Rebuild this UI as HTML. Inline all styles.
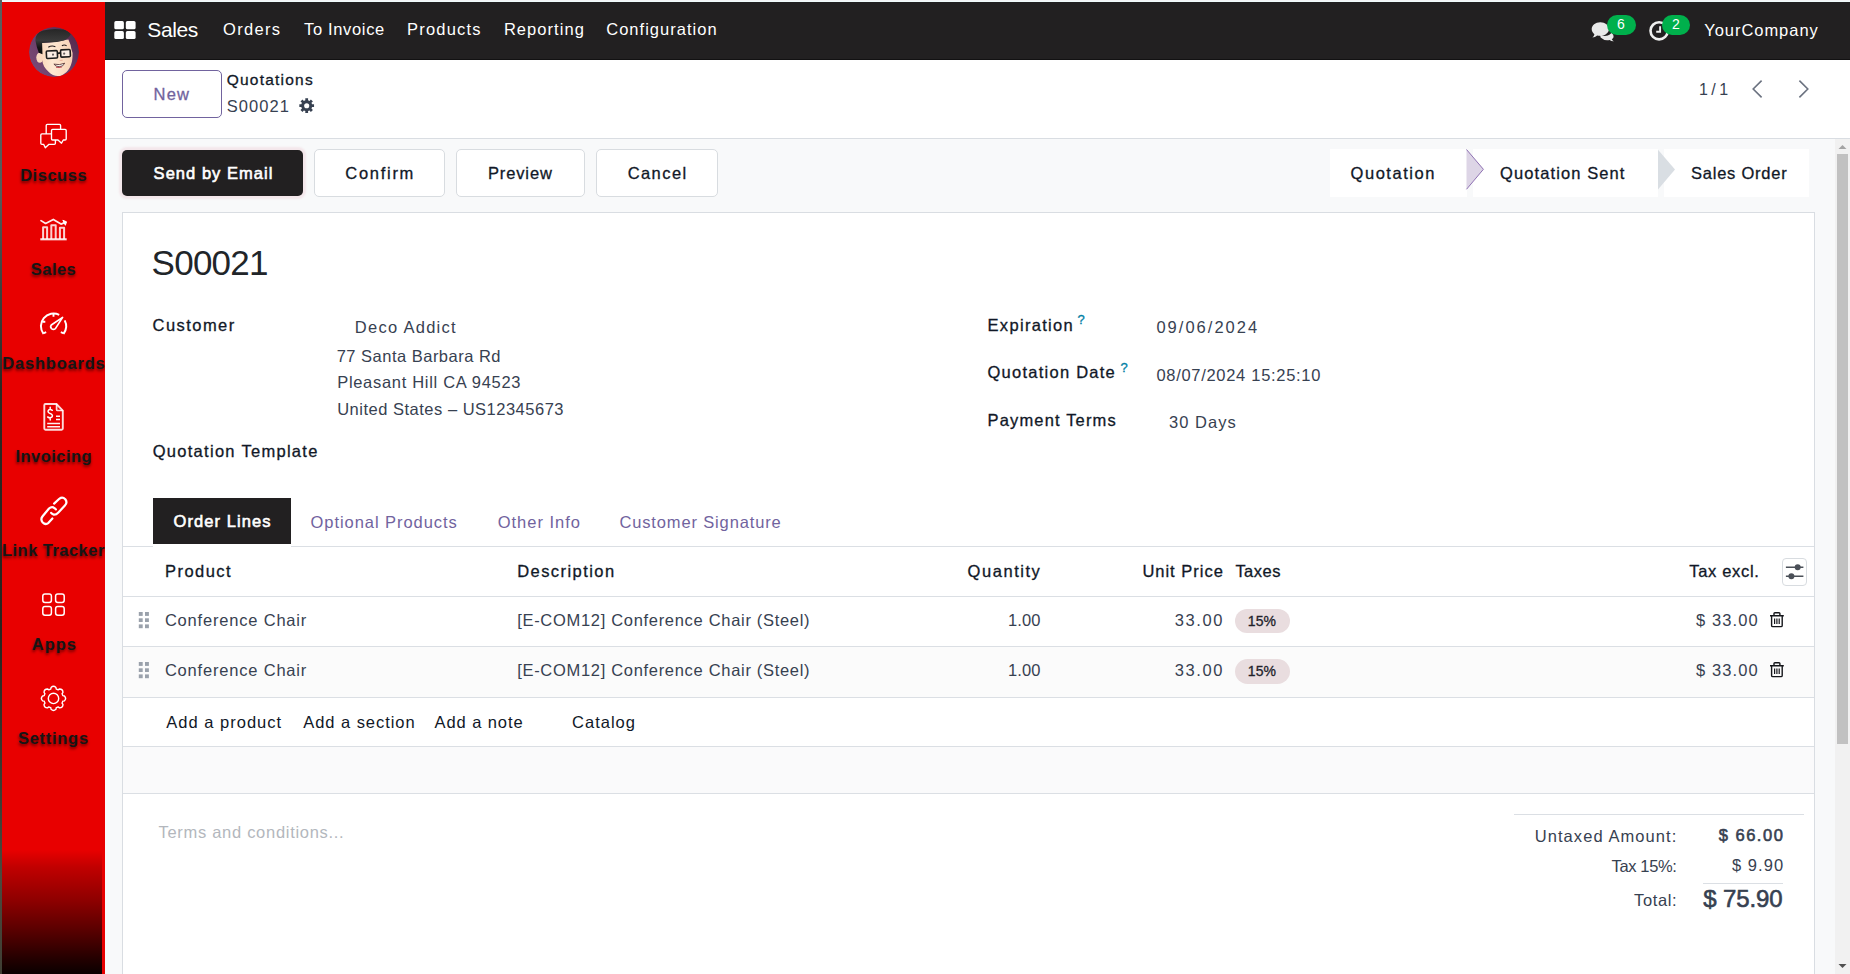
<!DOCTYPE html>
<html lang="en">
<head>
<meta charset="utf-8">
<title>Odoo - S00021</title>
<style>
html,body{margin:0;padding:0;}
body{width:1850px;height:974px;overflow:hidden;position:relative;background:#f8f9fa;font-family:"Liberation Sans",sans-serif;}
.a{position:absolute;}
.t{position:absolute;white-space:pre;line-height:1;font-weight:400;}
.t.b{font-weight:700;}
.t.m{-webkit-text-stroke:0.3px currentColor;}
.t.s{-webkit-text-stroke:0.6px currentColor;}
svg{position:absolute;overflow:visible;}
.ln{position:absolute;height:1px;background:#dbdfe4;}
</style>
</head>
<body>
<!-- page chrome strips -->
<div class="a" style="left:0;top:0;width:1850px;height:2px;background:linear-gradient(#f3f4f6 0,#f3f4f6 50%,#f0fbfc 50%,#f0fbfc 100%);"></div>
<div class="a" style="left:0;top:0;width:2px;height:974px;z-index:1;background:linear-gradient(#5a5f5f 0,#555a5a 20%,#3c3f3d 30%,#2b2823 40%,#27241f 65%,#3a3a32 80%,#4a4a3e 90%,#3f3e33 100%);"></div>

<!-- top navbar -->
<div class="a" style="left:105px;top:2px;width:1745px;height:57px;background:#222021;"></div>
<div class="a" style="left:105px;top:59px;width:1745px;height:1px;background:#121112;"></div>
<!-- control panel -->
<div class="a" style="left:105px;top:60px;width:1745px;height:78px;background:#ffffff;"></div>
<div class="ln" style="left:105px;top:138px;width:1745px;background:#d9dde2;"></div>

<!-- sidebar -->
<div class="a" style="left:2px;top:2px;width:103px;height:972px;background:#e80000;"></div>
<div class="a" style="left:2px;top:850px;width:100px;height:124px;background:linear-gradient(#e80000 0,#c00000 14%,#8f0000 40%,#560000 66%,#230000 88%,#0a0000 100%);"></div>


<!-- new button -->
<div class="a" style="left:122px;top:70px;width:98px;height:46px;border:1px solid #71639e;border-radius:5px;background:#fff;"></div>

<!-- action buttons -->
<div class="a" style="left:122px;top:150px;width:181px;height:46px;border-radius:5px;background:#222021;box-shadow:0 0 2px 3px rgba(225,110,130,.12);"></div>
<div class="a" style="left:314px;top:149px;width:129px;height:46px;border:1px solid #d8dce0;border-radius:5px;background:#fff;"></div>
<div class="a" style="left:456px;top:149px;width:127px;height:46px;border:1px solid #d8dce0;border-radius:5px;background:#fff;"></div>
<div class="a" style="left:596px;top:149px;width:120px;height:46px;border:1px solid #d8dce0;border-radius:5px;background:#fff;"></div>

<!-- status bar -->
<div class="a" style="left:1330px;top:149px;width:137px;height:48px;background:#fff;"></div>
<div class="a" style="left:1473px;top:149px;width:185px;height:48px;background:#fff;"></div>
<div class="a" style="left:1664px;top:149px;width:145px;height:48px;background:#fff;"></div>
<svg style="left:1460px;top:145px;" width="30" height="50" viewBox="0 0 30 50"><polygon points="6.5,4.5 23.4,24.3 6.5,44.3" fill="#ddd5e6"/><polyline points="6.5,4.5 23.4,24.3 6.5,44.3" fill="none" stroke="#8f72b3" stroke-width="1"/></svg>
<svg style="left:1652px;top:145px;" width="30" height="50" viewBox="0 0 30 50"><polygon points="6,4.7 23,24.5 6,44.5" fill="#d9dee3"/></svg>

<!-- sheet -->
<div class="a" style="left:122px;top:212px;width:1691px;height:800px;border:1px solid #d9dde2;background:#fff;"></div>

<!-- notebook tabs -->
<div class="ln" style="left:123px;top:546px;width:1691px;"></div>
<div class="a" style="left:153px;top:545px;width:138px;height:3px;background:#fff;"></div>
<div class="a" style="left:153px;top:498px;width:138px;height:46px;background:#222021;"></div>

<!-- list -->
<div class="ln" style="left:123px;top:596px;width:1691px;"></div>
<div class="ln" style="left:123px;top:646px;width:1691px;"></div>
<div class="a" style="left:123px;top:647px;width:1691px;height:50px;background:#fbfbfb;"></div>
<div class="ln" style="left:123px;top:697px;width:1691px;"></div>
<div class="ln" style="left:123px;top:746px;width:1691px;"></div>
<div class="a" style="left:123px;top:747px;width:1691px;height:46px;background:#fafafb;"></div>
<div class="ln" style="left:123px;top:793px;width:1691px;"></div>
<!-- tax tags -->
<div class="a" style="left:1235px;top:609px;width:55px;height:24px;border-radius:12px;background:#e9dddf;"></div>
<div class="a" style="left:1235px;top:659px;width:55px;height:25px;border-radius:12.5px;background:#e9dddf;"></div>
<!-- optional columns button -->
<div class="a" style="left:1782px;top:558px;width:23px;height:26px;border:1px solid #d8dce0;border-radius:4px;background:#fff;"></div>

<!-- totals -->
<div class="ln" style="left:1514px;top:814px;width:290px;"></div>
<div class="ln" style="left:1703px;top:883px;width:80px;"></div>

<!-- scrollbar -->
<div class="a" style="left:1835px;top:139px;width:15px;height:835px;background:#f1f1f1;"></div>
<div class="a" style="left:1837px;top:154px;width:11px;height:590px;background:#c1c1c1;"></div>
<svg style="left:1835px;top:139px;" width="15" height="15" viewBox="0 0 15 15"><polygon points="3.5,10 7.5,6 11.5,10" fill="#a3a3a3"/></svg>
<svg style="left:1835px;top:959px;" width="15" height="15" viewBox="0 0 15 15"><polygon points="3.5,5 11.5,5 7.5,9" fill="#505050"/></svg>

<!-- avatar -->
<svg style="left:29px;top:27px;" width="50" height="50" viewBox="0 0 50 50">
<defs><linearGradient id="avg" x1="0" y1="1" x2="1" y2="0.2"><stop offset="0" stop-color="#7d4d7a"/><stop offset=".55" stop-color="#6a3c67"/><stop offset="1" stop-color="#54284b"/></linearGradient>
<linearGradient id="avh" x1="0" y1="0" x2="0" y2="1"><stop offset="0" stop-color="#262626"/><stop offset=".45" stop-color="#3a3a3a"/><stop offset=".75" stop-color="#141414"/><stop offset="1" stop-color="#0c0c0c"/></linearGradient>
<linearGradient id="avf" x1="0" y1="0" x2="1" y2="0"><stop offset="0" stop-color="#fbd9bd"/><stop offset=".35" stop-color="#fee8d2"/><stop offset="1" stop-color="#f8d2b6"/></linearGradient>
<clipPath id="avc"><circle cx="25" cy="25" r="25"/></clipPath></defs>
<g clip-path="url(#avc)">
<circle cx="25" cy="25" r="25" fill="url(#avg)"/>
<ellipse cx="10.8" cy="30.6" rx="3.5" ry="5.2" fill="#f9d8bf"/>
<path d="M12.9 15.9 L20 15.4 Q28 15.3 35 13.2 L39.4 12.5 Q42 18 42.4 22.1 Q44.2 26 43.5 30 C43.2 38 39.5 45 33 48.2 C29 49.9 23.5 49.2 19.8 45 C15.8 41.5 13.6 37.5 13.2 33 Q12.9 30 12.9 27 Z" fill="url(#avf)"/>
<path d="M6.4 13.5 Q6 6 14 3.5 Q24 1 34 2.6 Q40.5 4 41.8 7.3 Q40 11 35 13.4 Q28 15.5 20 15.6 L13.1 16.1 L13.5 27.2 L9.8 25.8 Q7.5 20 6.4 13.5 Z" fill="url(#avh)"/>
<path d="M19.3 20.3 Q22.6 18 26.4 19.7" stroke="#2a2020" stroke-width="1.1" fill="none"/><path d="M32.9 18.8 Q35.2 17.2 37.6 18.8" stroke="#2a2020" stroke-width="1.1" fill="none"/>
<g transform="rotate(-3 29 27)">
<rect x="17.4" y="23.5" width="11" height="7.4" rx="1" fill="#fbeee4" stroke="#1c1c1c" stroke-width="1.6"/>
<rect x="31.7" y="23.1" width="9.6" height="7.2" rx="1" fill="#fbeee4" stroke="#1c1c1c" stroke-width="1.6"/>
<path d="M28.4 26.3 L31.8 26.1" stroke="#1c1c1c" stroke-width="1.8"/>
<circle cx="24" cy="27.4" r="1.1" fill="#6a6262"/><circle cx="35.2" cy="26.9" r="1.1" fill="#6a6262"/>
</g>
<path d="M24.9 37.1 Q30.5 38.6 35.7 36.2 Q34.5 39.6 30.2 39.7 Q26.4 39.6 24.9 37.1Z" fill="#fff" stroke="#4a2424" stroke-width="0.8"/>
<path d="M27 40.2 Q30.2 41 33 39.9" stroke="#b8384a" stroke-width="0.9" fill="none"/>
<path d="M30.8 33.2 Q32.2 34 33.6 33" stroke="#efb9a2" stroke-width="1.1" fill="none"/>
</g></svg>

<!-- sidebar icons -->
<svg style="left:0;top:0;" width="106" height="974" viewBox="0 0 106 974" fill="none" stroke="#fff" stroke-width="1.35" stroke-linejoin="round" stroke-linecap="round">
<!-- discuss -->
<path d="M46.2 133.4 V125.4 Q46.2 124.3 47.3 124.3 H59.5 Q60.6 124.3 60.6 125.4 V129"/>
<path d="M52.6 129.4 H65.1 Q66.2 129.4 66.2 130.5 V138.9 Q66.2 140 65.1 140 H63.3 L61.5 143.2 L58 140 H52.6 Q51.5 140 51.5 138.9 V130.5 Q51.5 129.4 52.6 129.4 Z"/>
<path d="M51.2 133.8 H41.9 Q40.8 133.8 40.8 134.9 V143.2 Q40.8 144.3 41.9 144.3 H43.6 L45.3 147.8 L49 144.3 H54.3 Q55.4 144.3 55.4 143.2 V140.4"/>
<!-- sales -->
<path d="M40.3 239.3 H66.7" stroke-width="2.1" stroke-linecap="butt" stroke-opacity=".88"/>
<g stroke-width="2" stroke-opacity=".82" stroke-linecap="butt"><path d="M43.1 239 V227.2 H47.1 V239"/><path d="M51.3 239 V225.3 H55.7 V239"/><path d="M59.9 239 V227.8 H64.1 V239"/></g>
<path d="M41 220.6 L45.6 223.5 L53.3 219.4 L61 224.1 L64.6 222.6" stroke-width="1.7" stroke-opacity=".92"/>
<path d="M63.2 220.4 L66.5 221.8 L65.5 224.9 Z" fill="#fff" stroke-width="1"/>
<!-- dashboards -->
<g stroke-width="2" stroke-linecap="butt">
<path d="M43.5 333.8 A12.6 12.6 0 0 1 59.2 314.9"/>
<path d="M64.7 320.4 A12.6 12.6 0 0 1 63.5 333.8"/>
<path d="M43.3 333.3 L46.2 332.2 M63.7 333.3 L60.8 332.2" stroke-width="1.9"/>
<path d="M53.5 314 V316.7 M42.4 321.7 H45.3" stroke-width="1.9"/>
<path d="M62.6 317.4 L51.3 325 Q49.9 327 51.5 328.6 Q53.4 330 55.4 328.6 Z" stroke-width="1.7"/>
</g>
<!-- invoicing -->
<g stroke-width="1.9" stroke-opacity=".86">
<path d="M56.4 404 H45.5 Q44.3 404 44.3 405.2 V428.6 Q44.3 429.8 45.5 429.8 H61.6 Q62.8 429.8 62.8 428.6 V410.6 Z"/>
<path d="M56.6 404.4 V409.4 Q56.6 410.5 57.7 410.5 H62.4" stroke-width="1.7"/>
</g>
<path d="M47.2 423.4 H60 M47.2 426.7 H60 M56 416.2 H60 M56 419.6 H60" stroke-width="1.5" stroke-linecap="butt" stroke-opacity=".95"/>
<path d="M52.3 410.3 Q50.4 408.9 48.7 409.9 Q47.3 411.4 48.9 412.8 L51.4 414.1 Q53.2 415.6 51.8 417.2 Q50 418.4 47.7 417 M50.2 407.2 V409 M50.2 418 V419.9" stroke-width="1.5"/>
<!-- link tracker -->
<g stroke-width="2.2">
<path d="M54.1 503.6 L59.3 498.8 Q62.4 496.3 65.3 499.3 Q67.8 502.5 64.9 505.6 L58.4 512.4 Q56.2 514.8 53.8 514.6 Q52 514.2 51.1 512.9"/>
<path d="M52.4 518.5 L48.5 522.8 Q45.6 525.3 42.7 522.5 Q40.1 519.4 42.6 516.3 L49 508.5 Q51.2 506.6 53.4 507.4 Q55 508.2 55.9 509.4"/>
</g>
<!-- apps -->
<g stroke-width="1.5">
<rect x="42.8" y="593.9" width="8.6" height="8.6" rx="2.2"/><rect x="55.6" y="593.9" width="8.6" height="8.6" rx="2.2"/>
<rect x="42.8" y="606.6" width="8.6" height="8.6" rx="2.2"/><rect x="55.6" y="606.6" width="8.6" height="8.6" rx="2.2"/>
</g>
<!-- settings -->
<circle cx="53.5" cy="698.4" r="5.2" stroke-width="1.4"/>
<path d="M50.75 689.10 L51.08 687.47 Q53.50 685.10 55.92 687.47 L56.25 689.10 A9.7 9.7 0 0 1 58.13 689.88 L59.52 688.95 Q62.90 689.00 62.95 692.38 L62.02 693.77 A9.7 9.7 0 0 1 62.80 695.65 L64.43 695.98 Q66.80 698.40 64.43 700.82 L62.80 701.15 A9.7 9.7 0 0 1 62.02 703.03 L62.95 704.42 Q62.90 707.80 59.52 707.85 L58.13 706.92 A9.7 9.7 0 0 1 56.25 707.70 L55.92 709.33 Q53.50 711.70 51.08 709.33 L50.75 707.70 A9.7 9.7 0 0 1 48.87 706.92 L47.48 707.85 Q44.10 707.80 44.05 704.42 L44.98 703.03 A9.7 9.7 0 0 1 44.20 701.15 L42.57 700.82 Q40.20 698.40 42.57 695.98 L44.20 695.65 A9.7 9.7 0 0 1 44.98 693.77 L44.05 692.38 Q44.10 689.00 47.48 688.95 L48.87 689.88 A9.7 9.7 0 0 1 50.75 689.10 Z" stroke-width="1.4"/>
</svg>

<!-- navbar grid icon -->
<svg style="left:114px;top:21px;" width="22" height="18" viewBox="0 0 22 18" fill="#fff"><rect x="0.3" y="0.1" width="9.6" height="8.2" rx="1.6"/><rect x="11.8" y="0.1" width="9.8" height="8.2" rx="1.6"/><rect x="0.3" y="10.1" width="9.6" height="7.9" rx="1.6"/><rect x="11.8" y="10.1" width="9.8" height="7.9" rx="1.6"/></svg>
<!-- chat icon -->
<svg style="left:1590px;top:20px;" width="26" height="22" viewBox="0 0 26 22" fill="#e9e9e9">
<path d="M10 14.2 Q13 16.8 17.8 15.6 Q20 14.8 21.4 13 Q24 14.5 23.6 17 Q23.2 18.4 21.8 19.2 Q22.6 20.6 23.8 21.2 Q21.4 21.4 19.6 20 Q14.5 21.2 10.6 17.6 Z"/>
<path d="M10.3 2.2 C15.2 2.2 18.9 5.2 18.9 9 C18.9 12.8 15.2 15.8 10.3 15.8 C9.2 15.8 8.2 15.6 7.2 15.4 C5.8 16.6 4 17.2 2.4 17.4 C3.6 16.4 4.2 15.4 4.4 14.2 C2.6 12.8 1.7 11 1.7 9 C1.7 5.2 5.4 2.2 10.3 2.2 Z"/></svg>
<!-- clock icon -->
<svg style="left:1648px;top:19px;" width="24" height="24" viewBox="0 0 24 24" fill="none" stroke="#efefef"><circle cx="11.1" cy="11.8" r="8.6" stroke-width="2.6"/><path d="M12.1 7.2 V12.7 H8.2" stroke-width="1.9"/></svg>

<!-- breadcrumb cog -->
<svg style="left:298.8px;top:97.9px;" width="15.4" height="15.4" viewBox="0 0 15 15"><path d="M6.19 2.26 L6.11 0.33 L8.89 0.33 L8.81 2.26 L10.28 2.87 L11.58 1.45 L13.55 3.42 L12.13 4.72 L12.74 6.19 L14.67 6.11 L14.67 8.89 L12.74 8.81 L12.13 10.28 L13.55 11.58 L11.58 13.55 L10.28 12.13 L8.81 12.74 L8.89 14.67 L6.11 14.67 L6.19 12.74 L4.72 12.13 L3.42 13.55 L1.45 11.58 L2.87 10.28 L2.26 8.81 L0.33 8.89 L0.33 6.11 L2.26 6.19 L2.87 4.72 L1.45 3.42 L3.42 1.45 L4.72 2.87 Z M10.00 7.50 A2.5 2.5 0 1 0 5.00 7.50 A2.5 2.5 0 1 0 10.00 7.50 Z" fill="#374151" fill-rule="evenodd"/></svg>
<!-- pager chevrons -->
<svg style="left:1750px;top:78px;" width="64" height="22" viewBox="0 0 64 22" fill="none" stroke="#6b7280" stroke-width="1.6"><path d="M11.6 2.6 L3.2 11 L11.6 19.4"/><path d="M49.4 2.6 L57.8 11 L49.4 19.4"/></svg>

<!-- row handles -->
<svg style="left:138px;top:611px;" width="13" height="70" viewBox="0 0 13 70" fill="#9aa1ab">
<rect x="0.8" y="1" width="3.9" height="3.9"/><rect x="7" y="1" width="3.9" height="3.9"/><rect x="0.8" y="7.3" width="3.9" height="3.7"/><rect x="7" y="7.3" width="3.9" height="3.7"/><rect x="0.8" y="13.4" width="3.9" height="3.8"/><rect x="7" y="13.4" width="3.9" height="3.8"/>
<rect x="0.8" y="51" width="3.9" height="3.9"/><rect x="7" y="51" width="3.9" height="3.9"/><rect x="0.8" y="57.3" width="3.9" height="3.7"/><rect x="7" y="57.3" width="3.9" height="3.7"/><rect x="0.8" y="63.4" width="3.9" height="3.8"/><rect x="7" y="63.4" width="3.9" height="3.8"/>
</svg>
<!-- sliders icon -->
<svg style="left:1782px;top:558px;" width="25" height="28" viewBox="0 0 25 28" stroke="#4b5058" stroke-width="1.5" fill="#4b5058"><path d="M3.9 9.3 H21.4 M3.9 18.2 H21.4"/><circle cx="15.7" cy="9.3" r="3" stroke="none"/><circle cx="9.4" cy="18.2" r="3" stroke="none"/></svg>
<!-- trash icons -->
<svg style="left:1769px;top:611px;" width="16" height="70" viewBox="0 0 16 70" fill="none" stroke="#14161a" stroke-width="1.4">
<g><path d="M1 4.7 H14.8 M5 4.4 V2.6 Q5 1.7 5.9 1.7 H10 Q10.9 1.7 10.9 2.6 V4.4"/><path d="M2.6 5 V14.4 Q2.6 15.6 3.8 15.6 H12 Q13.2 15.6 13.2 14.4 V5"/><path d="M5.6 7.4 V13 M7.9 7.4 V13 M10.2 7.4 V13" stroke-width="1.2"/></g>
<g transform="translate(0 50)"><path d="M1 4.7 H14.8 M5 4.4 V2.6 Q5 1.7 5.9 1.7 H10 Q10.9 1.7 10.9 2.6 V4.4"/><path d="M2.6 5 V14.4 Q2.6 15.6 3.8 15.6 H12 Q13.2 15.6 13.2 14.4 V5"/><path d="M5.6 7.4 V13 M7.9 7.4 V13 M10.2 7.4 V13" stroke-width="1.2"/></g>
</svg>

<!-- navbar badges -->
<div class="a" style="left:1607px;top:15px;width:29px;height:20px;border-radius:10px;background:#00b04c;"></div>
<div class="a" style="left:1662px;top:15px;width:28px;height:20px;border-radius:10px;background:#00b04c;"></div>

<div class="a" style="left:0;top:0;width:105px;height:974px;overflow:hidden;">
<span class="t b" style="left:20.2px;top:167.0px;font-size:16.5px;color:#151515;letter-spacing:0.517px;text-shadow:0 2px 3px rgba(0,0,0,.55);">Discuss</span>
<span class="t b" style="left:30.8px;top:261.0px;font-size:16.5px;color:#151515;letter-spacing:0.45px;text-shadow:0 2px 3px rgba(0,0,0,.55);">Sales</span>
<span class="t b" style="left:2.3px;top:355.0px;font-size:16.5px;color:#151515;letter-spacing:0.789px;text-shadow:0 2px 3px rgba(0,0,0,.55);">Dashboards</span>
<span class="t b" style="left:15.4px;top:448.0px;font-size:16.5px;color:#151515;letter-spacing:0.475px;text-shadow:0 2px 3px rgba(0,0,0,.55);">Invoicing</span>
<span class="t b" style="left:2.0px;top:542.0px;font-size:16.5px;color:#151515;letter-spacing:0.464px;text-shadow:0 2px 3px rgba(0,0,0,.55);">Link Tracker</span>
<span class="t b" style="left:31.8px;top:636.0px;font-size:16.5px;color:#151515;letter-spacing:0.933px;text-shadow:0 2px 3px rgba(0,0,0,.55);">Apps</span>
<span class="t b" style="left:18.0px;top:730.0px;font-size:16.5px;color:#151515;letter-spacing:0.714px;text-shadow:0 2px 3px rgba(0,0,0,.55);">Settings</span>
</div>
<span class="t" style="left:147.3px;top:18.8px;font-size:21px;color:#ffffff;letter-spacing:-0.375px;">Sales</span>
<span class="t" style="left:223.0px;top:21.0px;font-size:16.5px;color:#ffffff;letter-spacing:1.32px;">Orders</span>
<span class="t" style="left:304.0px;top:21.0px;font-size:16.5px;color:#ffffff;letter-spacing:0.667px;">To Invoice</span>
<span class="t" style="left:407.1px;top:21.0px;font-size:16.5px;color:#ffffff;letter-spacing:1.186px;">Products</span>
<span class="t" style="left:503.9px;top:21.0px;font-size:16.5px;color:#ffffff;letter-spacing:1.05px;">Reporting</span>
<span class="t" style="left:606.2px;top:21.0px;font-size:16.5px;color:#ffffff;letter-spacing:1.025px;">Configuration</span>
<span class="t" style="left:1704.3px;top:21.9px;font-size:16.5px;color:#ffffff;letter-spacing:0.95px;">YourCompany</span>
<span class="t" style="left:1617.1px;top:17.0px;font-size:14px;color:#ffffff;">6</span>
<span class="t" style="left:1672.0px;top:17.0px;font-size:14px;color:#ffffff;">2</span>
<span class="t m" style="left:153.6px;top:85.8px;font-size:16.5px;color:#71639e;letter-spacing:1.15px;">New</span>
<span class="t m" style="left:226.7px;top:71.9px;font-size:15.5px;color:#111827;letter-spacing:1.222px;">Quotations</span>
<span class="t" style="left:226.7px;top:97.8px;font-size:16.5px;color:#374151;letter-spacing:1.06px;">S00021</span>
<span class="t" style="left:1699.0px;top:81.6px;font-size:16px;color:#374151;letter-spacing:-0.5px;">1 / 1</span>
<span class="t s" style="left:153.6px;top:165.1px;font-size:16.5px;color:#ffffff;letter-spacing:1.033px;">Send by Email</span>
<span class="t m" style="left:345.3px;top:165.0px;font-size:16.5px;color:#111827;letter-spacing:1.717px;">Confirm</span>
<span class="t m" style="left:487.9px;top:165.0px;font-size:16.5px;color:#111827;letter-spacing:0.883px;">Preview</span>
<span class="t m" style="left:627.7px;top:165.0px;font-size:16.5px;color:#111827;letter-spacing:1.42px;">Cancel</span>
<span class="t m" style="left:1350.6px;top:164.7px;font-size:16.5px;color:#111827;letter-spacing:1.525px;">Quotation</span>
<span class="t m" style="left:1500.0px;top:164.7px;font-size:16.5px;color:#111827;letter-spacing:1.1px;">Quotation Sent</span>
<span class="t m" style="left:1691.0px;top:164.7px;font-size:16.5px;color:#111827;letter-spacing:0.76px;">Sales Order</span>
<span class="t" style="left:151.6px;top:245.0px;font-size:35px;color:#212529;letter-spacing:-0.76px;">S00021</span>
<span class="t m" style="left:152.6px;top:317.0px;font-size:16.5px;color:#111827;letter-spacing:1.443px;">Customer</span>
<span class="t" style="left:354.8px;top:318.5px;font-size:16.5px;color:#374151;letter-spacing:1.28px;">Deco Addict</span>
<span class="t" style="left:336.7px;top:347.9px;font-size:16.5px;color:#374151;letter-spacing:0.489px;">77 Santa Barbara Rd</span>
<span class="t" style="left:337.2px;top:374.0px;font-size:16.5px;color:#374151;letter-spacing:0.69px;">Pleasant Hill CA 94523</span>
<span class="t" style="left:337.2px;top:400.6px;font-size:16.5px;color:#374151;letter-spacing:0.504px;">United States – US12345673</span>
<span class="t m" style="left:152.7px;top:442.9px;font-size:16.5px;color:#111827;letter-spacing:1.288px;">Quotation Template</span>
<span class="t m" style="left:987.5px;top:317.1px;font-size:16.5px;color:#111827;letter-spacing:1.322px;">Expiration</span>
<span class="t m" style="left:1077.45px;top:313.0px;font-size:13px;color:#0180a5;">?</span>
<span class="t" style="left:1156.4px;top:318.8px;font-size:16.5px;color:#374151;letter-spacing:2.022px;">09/06/2024</span>
<span class="t m" style="left:987.5px;top:364.0px;font-size:16.5px;color:#111827;letter-spacing:1.254px;">Quotation Date</span>
<span class="t m" style="left:1120.5px;top:361.0px;font-size:13px;color:#0180a5;">?</span>
<span class="t" style="left:1156.4px;top:366.9px;font-size:16.5px;color:#374151;letter-spacing:0.7px;">08/07/2024 15:25:10</span>
<span class="t m" style="left:987.5px;top:411.6px;font-size:16.5px;color:#111827;letter-spacing:1.158px;">Payment Terms</span>
<span class="t" style="left:1169.0px;top:413.9px;font-size:16.5px;color:#374151;letter-spacing:1.033px;">30 Days</span>
<span class="t s" style="left:173.5px;top:513.3px;font-size:16.5px;color:#ffffff;letter-spacing:1.07px;">Order Lines</span>
<span class="t" style="left:310.5px;top:514.0px;font-size:16.5px;color:#71639e;letter-spacing:0.95px;">Optional Products</span>
<span class="t" style="left:497.7px;top:514.0px;font-size:16.5px;color:#71639e;letter-spacing:0.989px;">Other Info</span>
<span class="t" style="left:619.4px;top:514.0px;font-size:16.5px;color:#71639e;letter-spacing:0.859px;">Customer Signature</span>
<span class="t m" style="left:165.0px;top:563.0px;font-size:16.5px;color:#111827;letter-spacing:1.467px;">Product</span>
<span class="t m" style="left:517.2px;top:563.0px;font-size:16.5px;color:#111827;letter-spacing:1.44px;">Description</span>
<span class="t m" style="left:967.6px;top:563.0px;font-size:16.5px;color:#111827;letter-spacing:1.543px;">Quantity</span>
<span class="t m" style="left:1142.4px;top:563.0px;font-size:16.5px;color:#111827;letter-spacing:0.989px;">Unit Price</span>
<span class="t m" style="left:1235.4px;top:563.0px;font-size:16.5px;color:#111827;letter-spacing:0.475px;">Taxes</span>
<span class="t m" style="left:1689.2px;top:563.0px;font-size:16.5px;color:#111827;letter-spacing:0.688px;">Tax excl.</span>
<span class="t" style="left:164.9px;top:612.0px;font-size:16.5px;color:#374151;letter-spacing:0.807px;">Conference Chair</span>
<span class="t" style="left:517.2px;top:612.0px;font-size:16.5px;color:#374151;letter-spacing:0.691px;">[E-COM12] Conference Chair (Steel)</span>
<span class="t" style="left:1008.1px;top:612.0px;font-size:16.5px;color:#374151;letter-spacing:0.1px;">1.00</span>
<span class="t" style="left:1174.7px;top:612.0px;font-size:16.5px;color:#374151;letter-spacing:1.625px;">33.00</span>
<span class="t m" style="left:1247.8px;top:614.0px;font-size:14px;color:#22222a;letter-spacing:0.1px;">15%</span>
<span class="t" style="left:1696.1px;top:612.0px;font-size:16.5px;color:#374151;letter-spacing:1.083px;">$ 33.00</span>
<span class="t" style="left:164.9px;top:661.8px;font-size:16.5px;color:#374151;letter-spacing:0.807px;">Conference Chair</span>
<span class="t" style="left:517.2px;top:661.8px;font-size:16.5px;color:#374151;letter-spacing:0.691px;">[E-COM12] Conference Chair (Steel)</span>
<span class="t" style="left:1008.1px;top:661.8px;font-size:16.5px;color:#374151;letter-spacing:0.1px;">1.00</span>
<span class="t" style="left:1174.7px;top:661.8px;font-size:16.5px;color:#374151;letter-spacing:1.625px;">33.00</span>
<span class="t m" style="left:1247.8px;top:663.8px;font-size:14px;color:#22222a;letter-spacing:0.1px;">15%</span>
<span class="t" style="left:1696.1px;top:661.8px;font-size:16.5px;color:#374151;letter-spacing:1.083px;">$ 33.00</span>
<span class="t" style="left:166.2px;top:713.8px;font-size:16.5px;color:#111827;letter-spacing:1.017px;">Add a product</span>
<span class="t" style="left:303.3px;top:713.8px;font-size:16.5px;color:#111827;letter-spacing:0.942px;">Add a section</span>
<span class="t" style="left:434.5px;top:713.8px;font-size:16.5px;color:#111827;letter-spacing:0.922px;">Add a note</span>
<span class="t" style="left:572.1px;top:713.8px;font-size:16.5px;color:#111827;letter-spacing:0.983px;">Catalog</span>
<span class="t" style="left:158.5px;top:824.2px;font-size:16.5px;color:#b3b7bd;letter-spacing:0.705px;">Terms and conditions...</span>
<span class="t" style="left:1534.7px;top:827.7px;font-size:16.5px;color:#374151;letter-spacing:1.079px;">Untaxed Amount:</span>
<span class="t s" style="left:1718.7px;top:826.9px;font-size:16.5px;color:#374151;letter-spacing:1.517px;">$ 66.00</span>
<span class="t" style="left:1611.6px;top:857.6px;font-size:16.5px;color:#374151;letter-spacing:-0.371px;">Tax 15%:</span>
<span class="t" style="left:1732.0px;top:857.2px;font-size:16.5px;color:#374151;letter-spacing:1.04px;">$ 9.90</span>
<span class="t" style="left:1634.0px;top:891.9px;font-size:16.5px;color:#374151;letter-spacing:0.64px;">Total:</span>
<span class="t s" style="left:1703.3px;top:887.1px;font-size:24px;color:#374151;letter-spacing:-0.117px;">$ 75.90</span>
</body>
</html>
